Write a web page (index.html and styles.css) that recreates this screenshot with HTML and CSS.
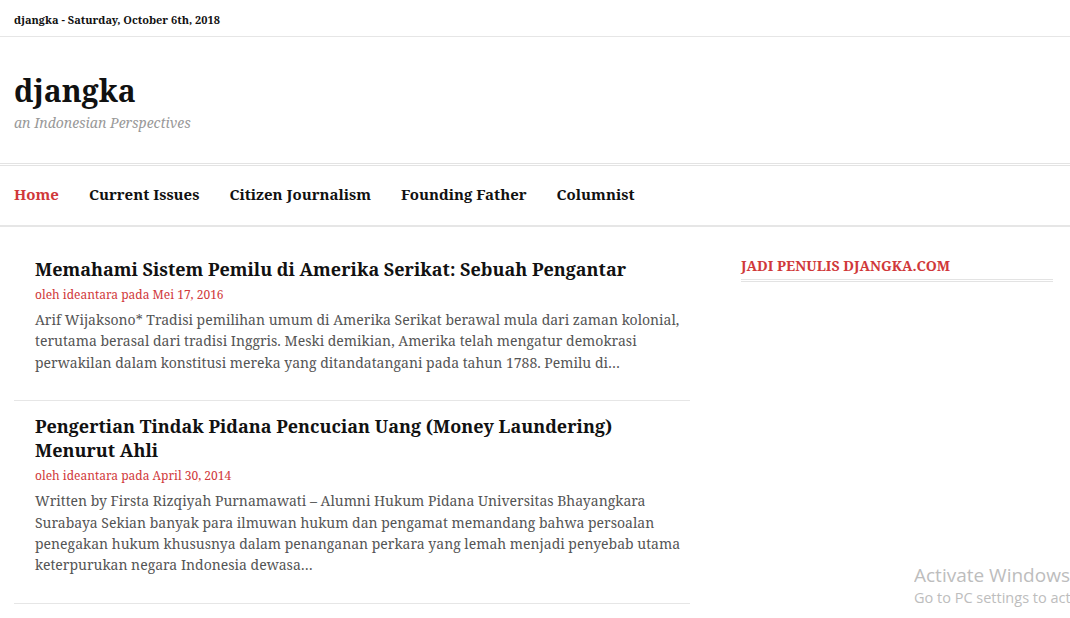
FILE: index.html
```html
<!DOCTYPE html>
<html lang="id">
<head>
<meta charset="utf-8">
<title>djangka</title>
<link rel="stylesheet" href="styles.css">
</head>
<body>
<div class="topbar"><span>djangka - Saturday, October 6th, 2018</span></div>
<header class="site-header">
  <h1 class="site-title">djangka</h1>
  <p class="site-desc">an Indonesian Perspectives</p>
</header>
<nav class="main-nav">
  <a class="nav-item active" href="#">Home</a>
  <a class="nav-item" href="#">Current Issues</a>
  <a class="nav-item" href="#">Citizen Journalism</a>
  <a class="nav-item" href="#">Founding Father</a>
  <a class="nav-item" href="#">Columnist</a>
</nav>
<div class="content">
  <main class="posts">
    <article class="post">
      <h2 class="post-title">Memahami Sistem Pemilu di Amerika Serikat: Sebuah Pengantar</h2>
      <div class="post-meta">oleh ideantara pada Mei 17, 2016</div>
      <p class="post-excerpt">Arif Wijaksono* Tradisi pemilihan umum di Amerika Serikat berawal mula dari zaman kolonial, terutama berasal dari tradisi Inggris. Meski demikian, Amerika telah mengatur demokrasi perwakilan dalam konstitusi mereka yang ditandatangani pada tahun 1788. Pemilu di…</p>
    </article>
    <article class="post">
      <h2 class="post-title">Pengertian Tindak Pidana Pencucian Uang (Money Laundering) Menurut Ahli</h2>
      <div class="post-meta">oleh ideantara pada April 30, 2014</div>
      <p class="post-excerpt">Written by Firsta Rizqiyah Purnamawati – Alumni Hukum Pidana Universitas Bhayangkara Surabaya Sekian banyak para ilmuwan hukum dan pengamat memandang bahwa persoalan penegakan hukum khususnya dalam penanganan perkara yang lemah menjadi penyebab utama keterpurukan negara Indonesia dewasa…</p>
    </article>
  </main>
  <aside class="sidebar">
    <h3 class="widget-title">JADI PENULIS DJANGKA.COM</h3>
  </aside>
</div>
<div class="activate">
  <div class="activate-title">Activate Windows</div>
  <div class="activate-sub">Go to PC settings to activate Windows.</div>
</div>
</body>
</html>
```
FILE: styles.css
```css
html, body {
  margin: 0;
  padding: 0;
  background: #fff;
  overflow: hidden;
}
body {
  font-family: "Noto Serif", "DejaVu Serif", serif;
  color: #111;
  width: 1070px;
  height: 618px;
  position: relative;
}
.topbar {
  height: 37px;
  border-bottom: 1px solid #e6e6e6;
  display: flex;
  align-items: center;
  padding-left: 14px;
  padding-top: 3px;
  box-sizing: border-box;
  font-size: 11px;
  font-weight: bold;
  color: #111;
}
.site-header {
  padding: 36px 14px 0;
  height: 126px;
  box-sizing: border-box;
}
.site-title {
  margin: 0;
  font-size: 30px;
  line-height: 36px;
  font-weight: bold;
  color: #111;
}
.site-desc {
  margin: 4px 0 0;
  font-size: 14px;
  font-style: italic;
  color: #999;
}
.main-nav {
  border-top: 1px solid #e3e3e3;
  padding-bottom: 1px;
  position: relative;
  display: flex;
  gap: 30px;
  padding-left: 14px;
  height: 60px;
  align-items: center;
  border-bottom: 2px solid #e6e6e6;
}
.main-nav::before {
  content: "";
  position: absolute;
  left: 0;
  right: 0;
  top: 1px;
  border-top: 1px solid #e3e3e3;
}
.nav-item {
  font-size: 15px;
  font-weight: bold;
  color: #111;
  text-decoration: none;
}
.nav-item.active {
  color: #d0383a;
}
.content {
  display: flex;
  padding: 0 14px;
  gap: 51px;
}
.posts {
  width: 676px;
  padding-top: 30px;
}
.post {
  padding: 0 4px 27px 21px;
  border-bottom: 1px solid #e6e6e6;
  margin-bottom: 13px;
}
.post-title {
  margin: 0;
  font-size: 18px;
  line-height: 24px;
  font-weight: bold;
  color: #111;
}
.post-meta {
  font-size: 12px;
  color: #d0383a;
  margin-top: 5px;
}
.post-excerpt {
  margin: 6px 0 0;
  font-size: 14px;
  line-height: 21.4px;
  color: #555;
}
.sidebar {
  width: 312px;
  padding-top: 29px;
}
.widget-title {
  margin: 0;
  font-size: 14px;
  font-weight: bold;
  color: #d0383a;
  padding-bottom: 4px;
  border-bottom: 1px solid #e3e3e3;
  position: relative;
}
.widget-title::after {
  content: "";
  position: absolute;
  left: 0;
  right: 0;
  bottom: -3px;
  border-bottom: 1px solid #e3e3e3;
}
.activate {
  position: absolute;
  left: 914px;
  top: 563px;
  width: 156px;
  overflow: hidden;
  font-family: "Open Sans", "Noto Sans", sans-serif;
  color: #bdbdbd;
  white-space: nowrap;
}
.activate-title {
  font-size: 19px;
  line-height: 25px;
}
.activate-sub {
  font-size: 14.5px;
  line-height: 20px;
}
```
